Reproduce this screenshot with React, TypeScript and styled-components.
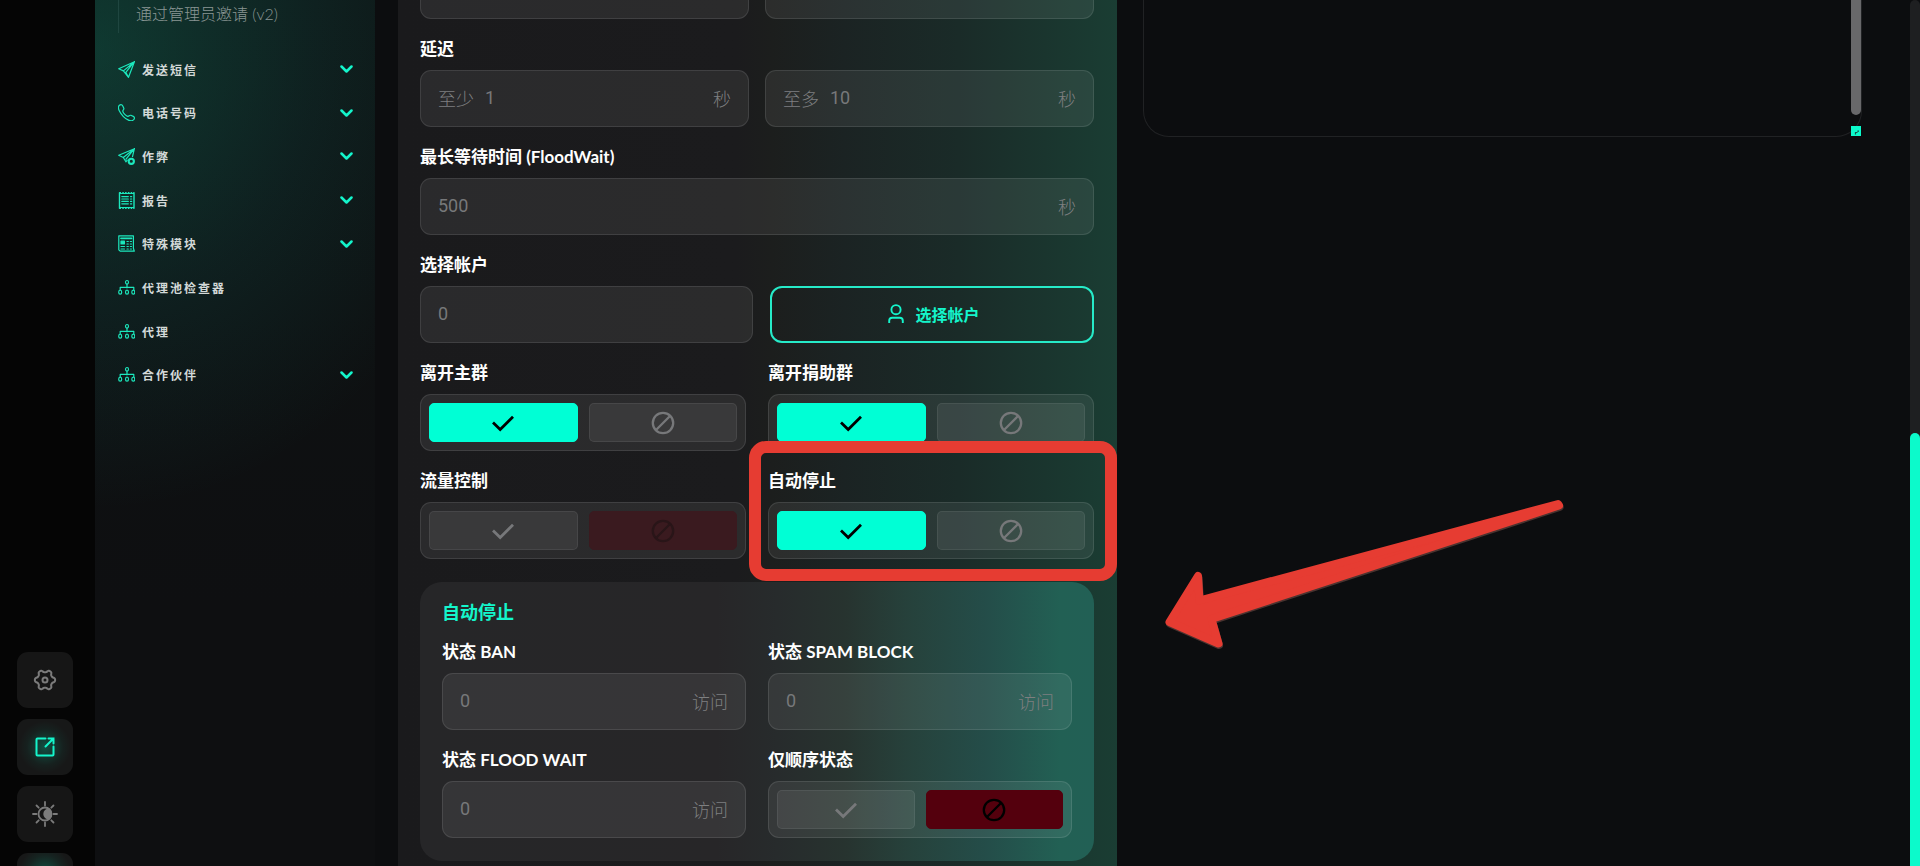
import React, { useId, useState } from "react";
import styled, { createGlobalStyle, css } from "styled-components";

const accent = "#00ffd5";
const mint = "#14f5cb";

const GlobalStyle = createGlobalStyle`
  *, *::before, *::after { box-sizing: border-box; }
  html, body { margin: 0; background: #0c0d0f; }
  body, input, button, textarea {
    font-family: Roboto, "Noto Sans CJK SC", sans-serif;
  }
`;

const Shell = styled.div`
  display: flex;
  height: 100vh;
  overflow: hidden;
  background: #0c0d0f;
`;

/* ---------- left rail ---------- */

const Rail = styled.nav`
  flex: 0 0 95px;
  display: flex;
  flex-direction: column;
  gap: 11px;
  padding-left: 17px;
  background: #050505;
`;

const RailButton = styled.button<{ $glow?: boolean }>`
  flex: none;
  display: grid;
  place-items: center;
  width: 56px;
  height: 56px;
  padding: 0;
  border: 0;
  border-radius: 11px;
  color: ${(p) => (p.$glow ? mint : "#7b7b7b")};
  background: ${(p) =>
    p.$glow
      ? "radial-gradient(circle at 50% 50%, rgba(0, 255, 200, 0.24) 0, rgba(0, 255, 200, 0.04) 18px, transparent 26px), #171818"
      : "#161616"};

  &:first-child { margin-top: auto; }
  &:last-child {
    margin-bottom: -43px;
    background: radial-gradient(circle at 50% 20px, rgba(0, 255, 200, 0.24) 0, rgba(0, 255, 200, 0.05) 18px, transparent 26px), #171818;
  }
`;

/* ---------- side menu ---------- */

const Sidebar = styled.aside`
  flex: 0 0 280px;
  padding: 0 22px 0 23px;
  background:
    radial-gradient(ellipse 400px 460px at 0 50px, rgba(20, 200, 160, 0.21), rgba(20, 150, 140, 0.11) 55%, transparent),
    linear-gradient(#0e1313, #0e0f11 70%);
`;

const SubList = styled.div`
  height: 33px;
  padding: 3px 0 0 17px;
  border-left: 1px solid #1f4640;
`;

const SubLink = styled.a`
  font-family: Lato, "Noto Sans CJK SC", sans-serif;
  font-size: 16px;
  line-height: 22px;
  font-weight: 300;
  color: #8a9694;
  text-decoration: none;
`;

const Menu = styled.ul`
  display: flex;
  flex-direction: column;
  justify-content: space-between;
  height: 334px;
  margin: 22px 0 0;
  padding: 0;
  list-style: none;
`;

const MenuLink = styled.a`
  display: flex;
  align-items: center;
  gap: 7px;
  height: 28px;
  color: #d3d9d8;
  font-size: 12px;
  font-weight: 700;
  letter-spacing: 2px;
  text-decoration: none;

  svg { color: #1ce8bd; }
  svg:last-child:not(:first-child) { margin-left: auto; color: ${mint}; }
`;

/* ---------- content ---------- */

const Content = styled.main`
  flex: 1;
  min-width: 0;
  display: grid;
  grid-template-columns: 1fr 1fr;
  gap: 26px;
  padding: 0 48px 0 23px;
`;

const Panel = styled.form`
  height: 100vh;
  overflow: hidden;
  padding: 0 23px 0 22px;
  background: linear-gradient(90deg, #1a1a1c 0%, #1b1b1d 47%, #1c1e1d 52%, #1b2323 62%, #1a2b28 78%, #1a352e 90%, #1a3d33 100%);
`;

const Fields = styled.div`
  display: flex;
  flex-direction: column;
  gap: 20px;
  margin-top: -38px;
`;

const Row = styled.div<{ $gap?: number }>`
  display: grid;
  grid-template-columns: 1fr 1fr;
  gap: 20px ${(p) => p.$gap ?? 16}px;
`;

const AccountRow = styled.div`
  display: grid;
  grid-template-columns: 333fr 324fr;
  gap: 17px;
  align-items: end;
`;

const Field = styled.div`
  position: relative;
  display: flex;
  flex-direction: column;
  gap: 10px;
  min-width: 0;
`;

const labelText = css`
  color: #ffffff;
  font-family: Lato, "Noto Sans CJK SC", sans-serif;
  font-size: 17px;
  line-height: 20px;
  padding-bottom: 1px;
  font-weight: 700;
`;

const Label = styled.label`
  ${labelText}
`;

const GroupLabel = styled.span`
  ${labelText}
`;

const InputBox = styled.div`
  display: flex;
  align-items: center;
  gap: 11px;
  height: 57px;
  padding: 0 17px 2px;
  border: 1px solid rgba(255, 255, 255, 0.1);
  border-radius: 11px;
  background: rgba(255, 255, 255, 0.07);
  color: #7e7f80;
  font-size: 18px;
  font-weight: 300;
`;

const TextInput = styled.input`
  flex: 1;
  min-width: 0;
  padding: 0;
  border: 0;
  outline: 0;
  background: transparent;
  color: #c8c8c8;
  font-size: 18px;
  line-height: 24px;

  &::placeholder { color: #77787a; opacity: 1; }
`;

const OutlineButton = styled.button`
  display: flex;
  align-items: center;
  justify-content: center;
  gap: 11px;
  height: 57px;
  padding: 0 0 2px 4px;
  border: 2px solid #26eac8;
  border-radius: 12px;
  background: transparent;
  color: ${mint};
  font-size: 16px;
  font-weight: 700;
`;

const Toggle = styled.div`
  display: grid;
  grid-template-columns: 1fr 1fr;
  gap: 11px;
  height: 57px;
  padding: 8px;
  border: 1px solid rgba(255, 255, 255, 0.1);
  border-radius: 11px;
  background: rgba(255, 255, 255, 0.07);
`;

type Tone = "idle" | "yes" | "no" | "muted";

const tones: Record<Tone, ReturnType<typeof css>> = {
  idle: css`
    background: rgba(255, 255, 255, 0.07);
    border-color: rgba(255, 255, 255, 0.07);
    color: #77787a;
  `,
  yes: css`
    background: ${accent};
    border-color: ${accent};
    color: #000000;
  `,
  no: css`
    background: #54000d;
    border-color: #54000d;
    color: #000000;
  `,
  muted: css`
    background: #3a1a1f;
    border-color: #3a1a1f;
    color: #291518;
  `,
};

const Option = styled.label<{ $tone: Tone }>`
  position: relative;
  display: grid;
  place-items: center;
  border: 1px solid;
  border-radius: 5px;
  ${(p) => tones[p.$tone]}
`;

const HiddenRadio = styled.input`
  position: absolute;
  inset: 0;
  margin: 0;
  opacity: 0;
`;

const Card = styled.section`
  display: flex;
  flex-direction: column;
  gap: 20px;
  margin-top: 3px;
  padding: 22px 22px 23px;
  border-radius: 22px;
  background: linear-gradient(90deg, #262628 0%, #272628 44%, #272b2c 53%, #27332f 63%, #26423c 73%, #244d49 84%, #226054 95%, #226055 100%);
`;

const CardTitle = styled.h2`
  margin: 0;
  color: ${mint};
  font-size: 18px;
  line-height: 18px;
  font-weight: 700;
`;

/* ---------- right column ---------- */

const LogColumn = styled.div`
  position: relative;
  min-width: 0;
`;

const LogBox = styled.div`
  display: flex;
  height: 137px;
  border: 1px solid #212224;
  border-top: 0;
  border-radius: 0 0 26px 26px;
`;

const LogArea = styled.textarea`
  flex: 1;
  min-width: 0;
  padding: 0 20px;
  border: 0;
  outline: 0;
  resize: none;
  background: transparent;
  color: #9a9a9c;
`;

const LogScroll = styled.div`
  display: flex;
  flex-direction: column;
  gap: 11px;
  width: 10px;
`;

const LogThumb = styled.div`
  flex: 1;
  border-radius: 0 0 5px 5px;
  background: #68686a;
`;

const Arrow = styled.svg`
  position: absolute;
  left: 22px;
  top: 498px;
  pointer-events: none;
`;

const Highlight = styled.div`
  position: absolute;
  inset: -30px -23px -22px -19px;
  border: 12px solid #e63c32;
  border-radius: 17px;
  pointer-events: none;
`;

const PageScroll = styled.div`
  flex: 0 0 10px;
  display: flex;
  flex-direction: column;
  justify-content: flex-end;
  border-radius: 5px 5px 0 0;
  background: #1e1f21;
`;

const PageThumb = styled.div`
  height: 50%;
  border-radius: 5px 5px 0 0;
  background: #0cfacb;
`;

/* ---------- icons ---------- */

const Svg = ({ w, h = w, sw = 1, children }: {
  w: number; h?: number; sw?: number; children: React.ReactNode;
}) => (
  <svg width={w} height={h} viewBox={`0 0 ${w} ${h}`} fill="none" stroke="currentColor"
    strokeWidth={sw} strokeLinecap="round" strokeLinejoin="round" aria-hidden="true">
    {children}
  </svg>
);

const Plane = () => (
  <Svg w={17} sw={1.2}>
    <path d="M16.4.7.7 7.7l4.7 2.2L16.4.7 10.5 16.3l-2.7-4.9L16.4.7M5.4 9.9l5.1 6.4" />
  </Svg>
);

const Phone = () => (
  <Svg w={17} sw={1.2}>
    <path d="M1.4 1.3C3 .1 4.2.7 4.9 2.2l.9 2.1c.5 1.4-1.2 1.8-1 3 .3 1.7 3.300 4.700 5 5.100 1.200.2 1.700-1.500 3-1.100l2.500 1.100c1.500.8 1.500 2.300.2 3.500-2.600 2.300-7.300-.5-10.100-3.300C2.500 9.600-1.400 4 1.400 1.300Z" />
  </Svg>
);

const PlaneBadge = () => (
  <Svg w={17} sw={1.2}>
    <path d="M16.4.7.7 7.200l4.600 2.300L16.400.7l-1.900 8M5.300 9.500l2.600 4.300M8 11.200 16.400.7M7.900 13.800l1.300-1.600" />
    <circle cx="13.3" cy="13.3" r="2.600" strokeWidth={2.1} />
  </Svg>
);

const Report = () => (
  <Svg w={17} sw={1.2}>
    <path d="M1.500.8v15.400M16 .8v15.400" strokeWidth={1.4} />
    <path d="M1.500 1.500h14.500M1.500 15.500h14.500" strokeLinecap="butt" strokeWidth={1} />
    <path d="M1.500.8h14.500M1.500 16.200h14.500" strokeDasharray="1.500 1.300" strokeLinecap="butt" strokeWidth={1.600} />
    <path d="M3.800 4.600h6.500M3.800 7h6.500M3.800 9.400h6.500M3.800 11.800h6.500M12.500 4.600h1.200M12.500 7h1.200M12.500 9.400h1.200M12.500 11.800h1.200" />
  </Svg>
);

const Modules = () => (
  <Svg w={17} sw={1.2}>
    <path d="M.8.800h14.600v12.500l.9 2.900H2.200L.8 14.800Z" />
    <path d="M3 3.300h10.500" strokeWidth={1.8} />
    <rect x="3" y="6.200" width="3.400" height="2.800" fill="currentColor" />
    <path d="M9 6.500h1.300M12.300 6.500h1.200M9 9h1.300M12.300 9h1.200M3 11.500h3.500M9 11.500h1.300M12.300 11.500h1.200M3 14h3.500M9 14h1.300M12.300 14h1.200" />
  </Svg>
);

const Tree = () => (
  <Svg w={17} sw={1.2}>
    <ellipse cx="9" cy="3.300" rx="1.500" ry="1.800" />
    <path d="M9 5.200v3.600M2.200 10.600V8.300h13.600v2.300" />
    <ellipse cx="2.200" cy="13.200" rx="1.500" ry="2" />
    <ellipse cx="9" cy="13.200" rx="1.500" ry="2" />
    <ellipse cx="15.300" cy="13.200" rx="1.500" ry="2" />
  </Svg>
);

const Chevron = () => (
  <Svg w={13} h={8} sw={2.5}>
    <path d="m1.500 1.500 5 5 5-5" />
  </Svg>
);

const Check = () => (
  <Svg w={24} h={18} sw={2.8}>
    <path d="m2 8.500 7.200 7L22 2.800" strokeLinecap="butt" strokeLinejoin="miter" />
  </Svg>
);

const Ban = () => (
  <Svg w={24} sw={2.3}>
    <circle cx="12" cy="12" r="10.200" />
    <path d="m5 19 14-14" />
  </Svg>
);

const Person = () => (
  <Svg w={16} h={20} sw={1.9}>
    <circle cx="8" cy="5.700" r="4.600" />
    <path d="M1.200 19v-2.200c0-2 1.200-3 3-3h7.600c1.800 0 3 1 3 3V19" strokeLinecap="butt" />
  </Svg>
);

/* Six-lobed cog outline: the radius swells towards every 60 degrees. */
const cogPath =
  "M" +
  Array.from({ length: 72 }, (_, i) => {
    const a = (i * 5 * Math.PI) / 180;
    const r = 8.9 + 1.300 * Math.tanh(1.800 * Math.cos(6 * a));
    return `${(12 + r * Math.cos(a)).toFixed(2)} ${(12 + r * Math.sin(a)).toFixed(2)}`;
  }).join("L") +
  "Z";

const Gear = () => (
  <Svg w={24} sw={2}>
    <path d={cogPath} />
    <circle cx="12" cy="12" r="2.500" />
  </Svg>
);

const External = () => (
  <Svg w={20} sw={2}>
    <path d="M10.500 1.500H2.400c-.6 0-.9.300-.9.900v15.200c0 .6.300.9.900.9h15.200c.6 0 .9-.3.900-.9V9.500M13.500 1.500h5v5M18.500 1.500l-8 8" strokeLinejoin="miter" />
  </Svg>
);

const Brightness = () => (
  <Svg w={26} sw={1.8}>
    <circle cx="13" cy="13" r="6.500" />
    <path d="M13 9a6 6 0 0 1 4-1.700 7 7 0 0 1 0 11.400A6 6 0 0 1 13 17a5.500 5.500 0 0 1 0-8Z" fill="currentColor" stroke="none" />
    <path d="M13 1v3.500M13 21.500V25M1 13h3.500M21.500 13H25M4.500 4.500l2.200 2.200M19.300 19.300l2.200 2.200M4.500 21.500l2.200-2.200M19.300 6.700l2.200-2.200" />
  </Svg>
);

const ResizeGrip = () => (
  <svg width="10" height="10" viewBox="0 0 10 10" aria-hidden="true">
    <rect width="10" height="10" fill="#0cfacb" />
    <path d="M4.500 8.500v-2h2M7 6V5h1" fill="none" stroke="#17544a" strokeWidth="1.200" />
  </svg>
);

/* ---------- composed controls ---------- */

function NumberField({ label, hint, unit, value }: {
  label?: string; hint?: string; unit?: string; value?: string;
}) {
  const id = useId();
  return (
    <Field>
      {label && <Label htmlFor={id}>{label}</Label>}
      <InputBox>
        {hint && <span>{hint}</span>}
        <TextInput id={id} aria-label={label ? undefined : hint ?? "数值"} placeholder={value} inputMode="numeric" />
        {unit && <span>{unit}</span>}
      </InputBox>
    </Field>
  );
}

function ToggleField({ label, initial, offTone = "no", children }: {
  label: string; initial: boolean; offTone?: Tone; children?: React.ReactNode;
}) {
  const id = useId();
  const [on, setOn] = useState(initial);
  return (
    <Field>
      <GroupLabel id={id}>{label}</GroupLabel>
      <Toggle role="radiogroup" aria-labelledby={id}>
        <Option $tone={on ? "yes" : "idle"}>
          <HiddenRadio type="radio" name={id} aria-label="是" checked={on} onChange={() => setOn(true)} />
          <Check />
        </Option>
        <Option $tone={on ? "idle" : offTone}>
          <HiddenRadio type="radio" name={id} aria-label="否" checked={!on} onChange={() => setOn(false)} />
          <Ban />
        </Option>
      </Toggle>
      {children}
    </Field>
  );
}

const menu: { text: string; icon: React.ReactNode; open?: boolean }[] = [
  { text: "发送短信", icon: <Plane />, open: true },
  { text: "电话号码", icon: <Phone />, open: true },
  { text: "作弊", icon: <PlaneBadge />, open: true },
  { text: "报告", icon: <Report />, open: true },
  { text: "特殊模块", icon: <Modules />, open: true },
  { text: "代理池检查器", icon: <Tree /> },
  { text: "代理", icon: <Tree /> },
  { text: "合作伙伴", icon: <Tree />, open: true },
];

const arrowPath = "M4.500 124 33 78 34.500 102.500 393 6 394 7.500 46.500 121 53.500 145.500Z";

export default function App() {
  return (
    <>
      <GlobalStyle />
      <Shell>
        <Rail>
          <RailButton type="button" aria-label="设置"><Gear /></RailButton>
          <RailButton type="button" aria-label="打开" $glow><External /></RailButton>
          <RailButton type="button" aria-label="主题"><Brightness /></RailButton>
          <RailButton type="button" aria-label="更多" $glow />
        </Rail>

        <Sidebar>
          <SubList>
            <SubLink href="#invite">通过管理员邀请 (v2)</SubLink>
          </SubList>
          <Menu>
            {menu.map((m) => (
              <li key={m.text}>
                <MenuLink href="#menu">
                  {m.icon}
                  {m.text}
                  {m.open && <Chevron />}
                </MenuLink>
              </li>
            ))}
          </Menu>
        </Sidebar>

        <Content>
          <Panel>
            <Fields>
              <Row>
                <NumberField />
                <NumberField />
              </Row>
              <Field>
                <GroupLabel>延迟</GroupLabel>
                <Row>
                  <NumberField hint="至少" value="1" unit="秒" />
                  <NumberField hint="至多" value="10" unit="秒" />
                </Row>
              </Field>
              <NumberField label="最长等待时间 (FloodWait)" value="500" unit="秒" />
              <AccountRow>
                <NumberField label="选择帐户" value="0" />
                <OutlineButton type="button"><Person />选择帐户</OutlineButton>
              </AccountRow>
              <Row $gap={22}>
                <ToggleField label="离开主群" initial />
                <ToggleField label="离开捐助群" initial />
                <ToggleField label="流量控制" initial={false} offTone="muted" />
                <ToggleField label="自动停止" initial>
                  <Highlight />
                </ToggleField>
              </Row>
              <Card>
                <CardTitle>自动停止</CardTitle>
                <Row $gap={22}>
                  <NumberField label="状态 BAN" value="0" unit="访问" />
                  <NumberField label="状态 SPAM BLOCK" value="0" unit="访问" />
                  <NumberField label="状态 FLOOD WAIT" value="0" unit="访问" />
                  <ToggleField label="仅顺序状态" initial={false} />
                </Row>
              </Card>
            </Fields>
          </Panel>

          <LogColumn>
            <LogBox>
              <LogArea aria-label="日志" readOnly />
              <LogScroll>
                <LogThumb />
                <ResizeGrip />
              </LogScroll>
            </LogBox>
            <Arrow width="400" height="154" viewBox="0 0 400 154" aria-hidden="true">
              <g strokeWidth="8" strokeLinejoin="round">
                <path d={arrowPath} transform="translate(0.500 1.500)" fill="#4a3330" stroke="#4a3330" />
                <path d={arrowPath} fill="#e63c32" stroke="#e63c32" />
              </g>
            </Arrow>
          </LogColumn>
        </Content>

        <PageScroll>
          <PageThumb />
        </PageScroll>
      </Shell>
    </>
  );
}
